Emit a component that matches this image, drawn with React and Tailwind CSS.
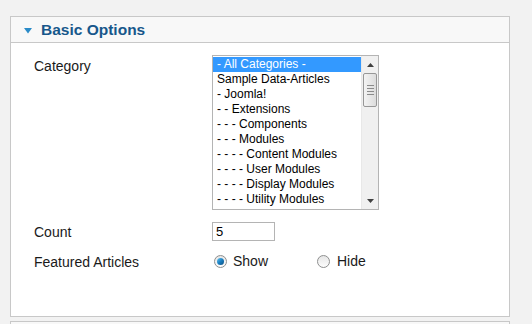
const CATEGORIES = [
  '- All Categories -',
  'Sample Data-Articles',
  '- Joomla!',
  '- - Extensions',
  '- - - Components',
  '- - - Modules',
  '- - - - Content Modules',
  '- - - - User Modules',
  '- - - - Display Modules',
  '- - - - Utility Modules',
]

function Radio({ checked }) {
  return (
    <span className="relative inline-block h-[13px] w-[13px] rounded-full border border-[#8e8f8f] bg-gradient-to-b from-[#e6e6e6] to-[#fdfdfd]">
      {checked && (
        <span className="absolute left-[2px] top-[2px] h-[7px] w-[7px] rounded-full bg-gradient-to-br from-[#5fc4f0] via-[#1a7fc1] to-[#0d4f80]" />
      )}
    </span>
  )
}

function Scrollbar() {
  return (
    <div className="flex w-[17px] flex-col bg-[#f0f0f0] border-l border-[#e8e8e8]">
      {/* up arrow */}
      <div className="flex h-[17px] items-center justify-center">
        <svg width="7" height="4" viewBox="0 0 7 4">
          <path d="M0 4 L3.5 0 L7 4 Z" fill="#404040" />
        </svg>
      </div>
      {/* thumb */}
      <div className="mx-[1px] flex h-[34px] flex-col items-center justify-center gap-[2px] rounded-[2px] border border-[#979797] bg-gradient-to-r from-[#f3f3f3] to-[#dcdcdc]">
        <span className="h-px w-[7px] bg-[#8a8a8a]" />
        <span className="h-px w-[7px] bg-[#8a8a8a]" />
        <span className="h-px w-[7px] bg-[#8a8a8a]" />
        <span className="h-px w-[7px] bg-[#8a8a8a]" />
      </div>
      <div className="flex-1" />
      {/* down arrow */}
      <div className="flex h-[17px] items-center justify-center">
        <svg width="7" height="4" viewBox="0 0 7 4">
          <path d="M0 0 L3.5 4 L7 0 Z" fill="#404040" />
        </svg>
      </div>
    </div>
  )
}

export default function App() {
  return (
    <div
      className="h-[324px] w-[532px] overflow-hidden bg-[#f2f2f2] px-[10px] pt-[16px]"
      style={{ fontFamily: '"Liberation Sans", Arial, sans-serif' }}
    >
      {/* Basic Options panel */}
      <div className="w-[500px] border border-[#c8c8c8] bg-white">
        <div className="flex h-[26px] items-center border-b border-[#c8c8c8] bg-[#f8f8f8] pl-[13px]">
          <svg width="8" height="6" viewBox="0 0 8 6" className="mt-[3px]">
            <path d="M0 0 L8 0 L4 5.5 Z" fill="#2a8bc8" />
          </svg>
          <h3 className="ml-[9px] text-[15.5px] font-bold leading-none text-[#17578b]">Basic Options</h3>
        </div>

        <div className="h-[273px] pl-[23px] pt-[12px] text-[14px] text-[#1a1a1a]">
          {/* Category */}
          <div className="flex">
            <label className="w-[178px] pt-[3px] leading-[16px]">Category</label>
            <div className="flex h-[155px] w-[167px] border border-[#b4b4b4] bg-white">
              <ul className="flex-1 pt-px text-[12px] leading-[15px] text-black">
                {CATEGORIES.map((c, i) => (
                  <li
                    key={c}
                    className={i === 0 ? 'bg-[#3399ff] pl-[4px] text-white' : 'pl-[4px]'}
                  >
                    {c}
                  </li>
                ))}
              </ul>
              <Scrollbar />
            </div>
          </div>

          {/* Count */}
          <div className="mt-[12px] flex items-center">
            <label className="w-[178px] leading-[16px]">Count</label>
            <div className="flex h-[19px] w-[63px] items-center border border-[#b4b4b4] bg-white pl-[3px] text-[13px] text-black">
              5
            </div>
          </div>

          {/* Featured Articles */}
          <div className="mt-[10px] flex items-center">
            <label className="w-[180px] leading-[16px]">Featured Articles</label>
            <div className="flex items-center">
              <Radio checked />
              <span className="ml-[6px] w-[84px]">Show</span>
              <Radio />
              <span className="ml-[7px]">Hide</span>
            </div>
          </div>
        </div>
      </div>

      {/* next panel */}
      <div className="mt-[4px] h-[20px] w-[500px] border border-[#c8c8c8] bg-[#f8f8f8]" />
    </div>
  )
}
